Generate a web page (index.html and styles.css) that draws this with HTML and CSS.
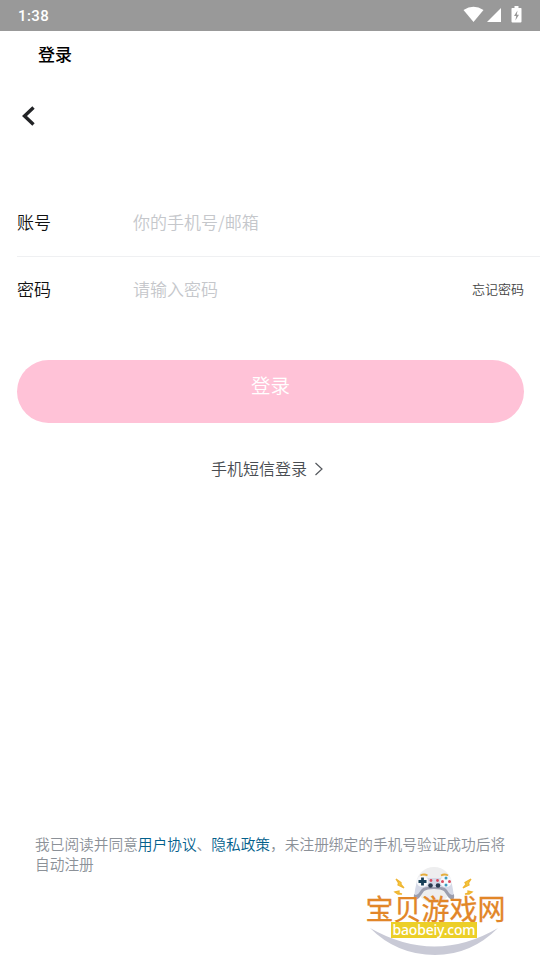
FILE: index.html
```html
<!DOCTYPE html>
<html lang="zh-CN">
<head>
<meta charset="utf-8">
<meta name="viewport" content="width=device-width">
<title>登录</title>
<link rel="stylesheet" href="styles.css">
</head>
<body>
<div class="screen">
  <header class="status">
    <span class="clock">1:38</span>
    <svg class="status-icons" width="60" height="20" viewBox="0 0 60 20" fill="#fff">
      <path d="M.5 5Q10.500-1.500 20.500 5L10.500 17Z"/>
      <path d="M38 3V17H24Z"/>
      <path fill-rule="evenodd" d="M49 3H51.500V1H55.500V3H58Q58.500 3 58.500 4V16.500Q58.500 17.500 57.500 17.500H49.500Q48.500 17.500 48.500 16.500V4Q48.500 3 49 3ZM54.500 5.500L51 11H53.200L52.400 15.500L56 9.800H53.800Z"/>
    </svg>
  </header>
  <h1 class="title">登录</h1>
  <nav class="nav">
    <svg width="16" height="22" viewBox="0 0 16 22" fill="none" stroke="#222326" stroke-width="3.400"><path d="M13.500 2.500L4.500 11L13.500 19.500"/></svg>
  </nav>
  <main class="form">
    <div class="row account"><span class="label">账号</span><span class="hint">你的手机号/邮箱</span></div>
    <div class="row"><span class="label">密码</span><span class="hint">请输入密码</span><a class="forgot">忘记密码</a></div>
    <button class="submit">登录</button>
    <a class="sms"><span class="sms-text">手机短信登录</span>
      <svg width="10" height="14" viewBox="0 0 10 14" fill="none" stroke="#54585d" stroke-width="1.200"><path d="M1.500 1L8 7L1.500 13"/></svg>
    </a>
  </main>
  <footer class="terms">我已阅读并同意<a>用户协议</a>、<a>隐私政策</a>，未注册绑定的手机号验证成功后将自动注册</footer>
  <div class="watermark">
    <svg class="art" width="150" height="100" viewBox="0 0 150 100">
      <circle cx="74" cy="25" r="18" fill="#eeeeef"/>
      <path d="M10 68Q75 105 138 68Q111 95 75 95Q37 95 10 68Z" fill="#c9cad6"/>
      <path d="M60 17Q64 16 68 18H80Q84 16 89 17Q92 20 94 37Q91 42 86 34Q83 29 80 29H68Q65 29 62 34Q57 42 54 37Q56 20 60 17Z" fill="#d5d9e7"/>
      <path d="M54 34Q57 37 61 30Q63 27 68 27H80Q85 27 87 30Q91 37 94 34Q95 43 89 38L84 31Q81 29 74 29Q67 29 64 31L59 38Q53 43 54 34Z" fill="#9c9eae"/>
      <path d="M60.500 15.500Q64 13.500 67.500 15.500M81 15.500Q84.500 13.500 88 15.500" fill="none" stroke="#e5ad3d" stroke-width="1.800"/>
      <circle cx="62.500" cy="21.500" r="5.800" fill="#f7f8fb"/><circle cx="86" cy="21.500" r="5.800" fill="#f7f8fb"/>
      <path d="M62.500 17.500V25.500M58.500 21.500H66.500" stroke="#173f57" stroke-width="2.800"/>
      <g fill="#3c9bbf"><circle cx="86" cy="18" r="1.500"/><circle cx="86" cy="25" r="1.500"/></g>
      <g fill="#d94d60"><circle cx="82.500" cy="21.500" r="1.500"/><circle cx="89.500" cy="21.500" r="1.500"/><circle cx="71" cy="20.500" r="1.400"/><circle cx="77.500" cy="20.500" r="1.400"/></g>
      <circle cx="70.500" cy="25.500" r="2.300" fill="#29394d"/><circle cx="78" cy="25.500" r="2.300" fill="#29394d"/>
      <path d="M36 19L41 22.500L41 24.500L44 28L38 25L38.500 23ZM111 19L105 22.500L106 24.500L103 28L109 25L108.500 23ZM35 32L39 31L39 33L42 34L38 34ZM112 32L108 31L108 33L105 34L109 34Z" fill="#f4ca3c" stroke="#efb532" stroke-width="1.300"/>
    </svg>
    <span class="brand">宝贝游戏网</span>
    <span class="domain">baobeiy.com</span>
  </div>
</div>
</body>
</html>
```
FILE: styles.css
```css
* { box-sizing: border-box; }
body { margin: 0; background: #fff; font-family: "Noto Sans CJK SC", sans-serif; font-weight: 350; }
.screen { position: relative; display: flex; flex-direction: column; height: 960px; overflow: hidden; }
.status { height: 31px; flex: none; display: flex; align-items: center; justify-content: space-between; padding: 0 18px; background: #999; color: #fff; }
.clock { padding-top: 1px; font: 500 15px/31px Roboto, sans-serif; letter-spacing: .4px; }
.status-icons { margin: -1px -1px 0 0; }
.title { margin: 0; padding-left: 38px; height: 48px; font-size: 17px; line-height: 45px; font-weight: 500; color: #000; }
.nav { height: 110px; padding: 26px 0 0 20px; }
.nav svg, .sms svg { display: block; }
.form { display: flex; flex-direction: column; padding-left: 17px; }
.row { display: flex; align-items: center; height: 67px; padding: 0 16px 5px 0; font-size: 17px; color: #111; }
.account { height: 68px; padding-bottom: 2px; border-bottom: 1px solid #eff0f2; }
.label { width: 116px; }
.hint { flex: 1; color: #c5c7cb; }
.forgot { font-size: 13px; color: #444; }
.submit { margin: 36px 16px 0 0; height: 63px; padding: 0 0 14px; border: 0; border-radius: 32px; background: #ffc2d7; color: #fff; font-family: inherit; font-weight: 350; font-size: 19.500px; }
.sms { display: flex; align-items: center; gap: 7px; margin: 35px 0 0 194px; font-size: 16px; line-height: 24px; color: #494d52; }
.sms-text { margin-top: -2px; }
.terms { margin: auto 34px 86px 35px; font-size: 14.700px; line-height: 20px; color: #8c9198; }
.terms a { color: #04608c; }
.watermark { position: absolute; left: 360px; top: 860px; width: 150px; height: 100px; }
.art, .brand, .domain { position: absolute; }
.art { left: 0; top: 0; }
.brand { left: 5.500px; top: 28px; font-size: 28px; line-height: 40px; white-space: nowrap; color: #e28628; font-weight: 400; -webkit-text-stroke: .3px #e28628; }
.domain { left: 31px; top: 62px; width: 86px; height: 16px; background: #eccf28; color: #fff; font: 500 14px/16px "Noto Sans", sans-serif; letter-spacing: -.2px; text-align: center; }
```
